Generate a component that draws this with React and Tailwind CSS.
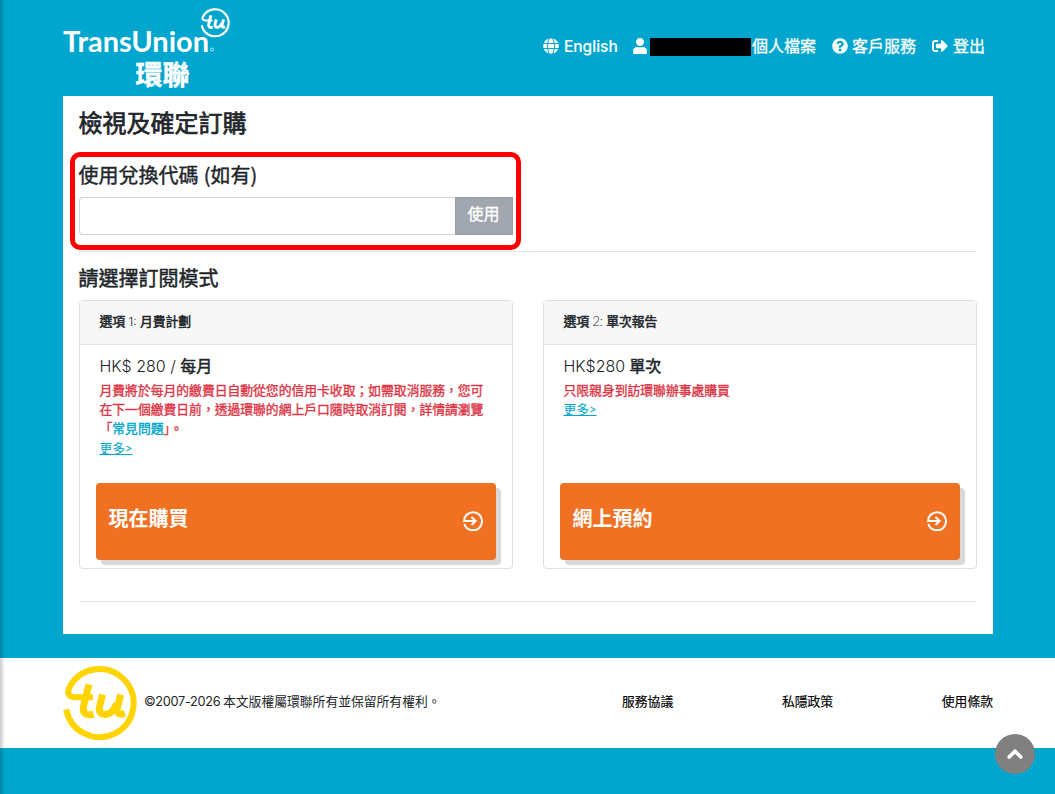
import { useState } from "react";
import { FaGlobe, FaUser, FaQuestionCircle, FaSignOutAlt } from "react-icons/fa";

const TuMark = ({ className, strokeWidth = 18, letterWidth = 21, x, y, width, height }) => (
    <svg
        className={className}
        x={x}
        y={y}
        width={width}
        height={height}
        viewBox="0 0 222 222"
        fill="none"
        stroke="currentColor"
        strokeWidth={strokeWidth}
        strokeLinejoin="round"
    >
        <path d="M9.5 130 A102 102 0 1 0 21 61 C9 80 18 94 36 94 H90" />
        <g strokeWidth={letterWidth}>
            <path d="M78 55 L62 119 C57 142 69 150 92 145" />
            <path d="M119 86 L110 120 C105 142 118 148 134 144 C150 139 156 126 161 112 M173 86 L164 122 C159 141 167 149 186 142" />
        </g>
    </svg>
);

const Logo = () => (
    <svg className="block h-[90px] w-[168px] overflow-visible text-white" viewBox="0 0 168 90">
        <text x="0" y="45.5" fill="currentColor" fontSize="28.5" fontWeight="700" textLength="146" lengthAdjust="spacingAndGlyphs" className="font-['Lato']">
            TransUnion
        </text>
        <circle cx="149" cy="43.5" r="1.5" fill="none" stroke="currentColor" strokeWidth=".8" opacity=".8" />
        <TuMark x={137.5} y={2} width={29.5} height={29.5} strokeWidth={16} letterWidth={22} />
        <text x="72.5" y="79" fill="currentColor" stroke="currentColor" strokeWidth=".5" fontSize="27" fontWeight="700" className="font-['Noto_Sans_CJK_TC']">
            環聯
        </text>
    </svg>
);

const ArrowCircle = () => (
    <svg className="mr-px h-5 w-5" viewBox="0 0 20 20" fill="none" stroke="currentColor" strokeWidth="2">
        <path d="M1.4 13 A9 9 0 1 0 1 10 H12.5" />
        <path d="M8.5 6 L12.7 10 L8.5 14" />
    </svg>
);

const PlanCard = ({ title, price, children, action }) => (
    <div className="flex h-[269px] w-[434px] flex-col rounded border border-[#dfdfdf] bg-white">
        <div className="flex h-11 items-center border-b border-[#dfdfdf] bg-[#f7f7f7] px-[19.5px] pb-0.5 text-[12.8px]">
            <h3>{title}</h3>
        </div>
        <div className="flex-1 px-[19.5px] pt-[9px]">
            <div className="text-base leading-6">{price}</div>
            <div className="mt-[3px] text-[12.8px] leading-[19.2px]">
                <div className="text-[#dc3545] [-webkit-text-stroke:0.35px]">{children}</div>
                <a href="#" className="block w-fit text-[#00a6ca] underline">更多&gt;</a>
            </div>
        </div>
        <button className="mx-4 mb-2 flex h-[77px] items-center justify-between rounded bg-[#f17122] px-3 pb-0.5 text-xl font-bold text-white shadow-[5px_5px_0_#d9d9d9]">
            <span className="pb-1.5 pl-[0.5px]">{action}</span>
            <ArrowCircle />
        </button>
    </div>
);

const strong = "[-webkit-text-stroke:0.5px]";

export default function App() {
    const [code, setCode] = useState("");

    return (
        <div className="relative h-[794px] overflow-hidden bg-[#00a6ce] font-['Lato','Noto_Sans_CJK_TC',sans-serif] text-[#212529]">
            {/* Header */}
            <header className="mx-[62px] flex h-24 justify-between pt-1.5 pl-px">
                <Logo />
                <nav className="mt-7 mr-2 flex h-6 items-center gap-4 text-base text-white [-webkit-text-stroke:0.3px]">
                    <a href="#" className="flex items-center gap-[5px]">
                        <FaGlobe />
                        <span className="w-[53px] pt-0.5 font-['Inter'] text-[15.5px] font-medium [-webkit-text-stroke:0.1px]">English</span>
                    </a>
                    <a href="#" className="flex items-center">
                        <FaUser className="w-3.5" />
                        <span className="mt-0.5 mr-px ml-[3px] h-[18px] w-[101px] bg-black" />
                        個人檔案
                    </a>
                    <a href="#" className="flex items-center gap-1">
                        <FaQuestionCircle />
                        客戶服務
                    </a>
                    <a href="#" className="flex items-center gap-[5px]">
                        <FaSignOutAlt />
                        登出
                    </a>
                </nav>
            </header>

            <main className="mr-[62px] ml-[63px] h-[538px] bg-white px-4 pt-[9px]">
                <h1 className="-ml-[0.5px] text-2xl leading-9 [-webkit-text-stroke:0.7px]">檢視及確定訂購</h1>

                {/* Redeem code */}
                <section className="-ml-[9px] mt-[11px] h-[98px] w-[451px] rounded-[10px] border-[5px] border-[#ff0000] px-1 pt-[3px]">
                    <h2 className="-ml-[0.5px] text-xl leading-[30px] [-webkit-text-stroke:0.4px]">
                        使用兌換代碼 <span className="font-['Noto_Sans_CJK_TC']">(如有)</span>
                    </h2>
                    <div className="mt-[7px] flex h-[38px] w-[434px]">
                        <input
                            value={code}
                            onChange={(e) => setCode(e.target.value)}
                            className="w-[376px] rounded-l border border-r-0 border-[#ced4da] bg-white px-3 outline-none"
                        />
                        <button className="w-[58px] border border-[#999da6] bg-[#a2a6ae] pr-px pb-1 text-base text-white [-webkit-text-stroke:0.3px]">使用</button>
                    </div>
                </section>

                <hr className="mt-px border-[#e5e5e5]" />

                <h2 className="-ml-[0.5px] mt-[11px] text-xl leading-[30px] [-webkit-text-stroke:0.5px]">請選擇訂閱模式</h2>
                <div className="mt-[7px] flex gap-[30px]">
                    <PlanCard
                        title={<><span className={strong}>選項</span><span className="font-['Inter'] text-xs font-light"> 1: </span><span className={strong}>月費計劃</span></>}
                        price={<><span className="font-['Inter'] font-light">HK$ 280 / </span><span className={strong}>每月</span></>}
                        action="現在購買"
                    >
                        月費將於每月的繳費日自動從您的信用卡收取；如需取消服務，您可<br />
                        在下一個繳費日前，透過環聯的網上戶口隨時取消訂閱，詳情請瀏覽<br />
                        「<a href="#" className="text-[#00a6ca]">常見問題</a>」。
                    </PlanCard>
                    <PlanCard
                        title={<><span className={strong}>選項</span> <span className="font-light">2:</span> <span className={strong}>單次報告</span></>}
                        price={<><span className="font-['Inter'] font-light">HK$280</span> <span className={strong}>單次</span></>}
                        action="網上預約"
                    >
                        只限親身到訪環聯辦事處購買
                    </PlanCard>
                </div>
                <hr className="mt-8 border-[#e5e5e5]" />
            </main>

            {/* Footer */}
            <footer className="mt-6 flex h-[90px] items-center bg-white pr-[62px] pl-[63px] text-[12.8px] text-black">
                <TuMark className="h-[74px] w-[74px] text-[#ffd400]" />
                <p className="ml-[7px] flex w-[478px] items-center pb-0.5 whitespace-nowrap text-[#212529]">
                    <span className="w-[76px] font-['Inter'] text-[12.8px] tracking-[-0.35px]">©2007-2026</span>
                    <span className="ml-[3px]">本文版權屬環聯所有並保留所有權利。</span>
                </p>
                <div className="flex flex-1 justify-between pb-0.5 [-webkit-text-stroke:0.15px]">
                    <a href="#">服務協議</a>
                    <a href="#">私隱政策</a>
                    <a href="#">使用條款</a>
                </div>
            </footer>

            <div className="absolute inset-y-0 left-0 w-[5px] bg-linear-to-r from-black/20 to-transparent" />

            {/* Back to top */}
            <button className="absolute top-[734px] right-5 flex h-10 w-10 items-center justify-center rounded-full bg-[#808080] text-white">
                <svg className="h-4 w-4" viewBox="0 0 16 16" fill="none" stroke="currentColor" strokeWidth="3.6" strokeLinecap="round" strokeLinejoin="round">
                    <path d="M2.2 11 L8 5.2 L13.8 11" />
                </svg>
            </button>
        </div>
    );
}
